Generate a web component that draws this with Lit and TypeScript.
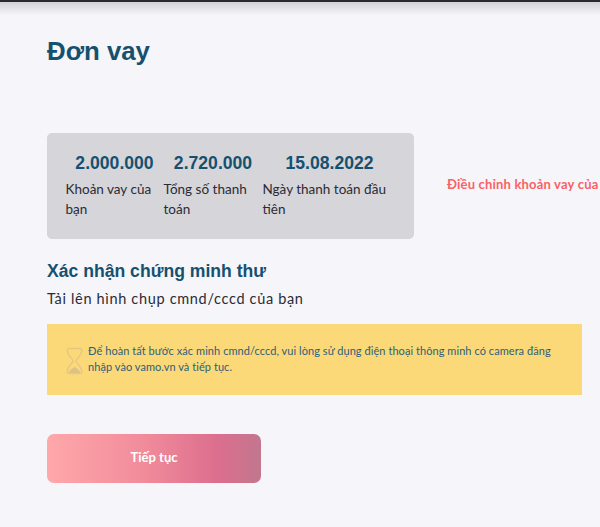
import { LitElement, html, css } from "lit";
import { customElement } from "lit/decorators.js";

@customElement("app-root")
export class AppRoot extends LitElement {
  static styles = css`
    :host { display: block; width: 600px; height: 527px; overflow: hidden; background: #f5f5fa; font-family: "Lato", sans-serif; color: #2b2b33; }
    .topbar { height: 2px; background: #2a2a2e; }
    .shade { height: 13px; background: linear-gradient(#d2d2d6, #f5f5fa); }
    main { padding: 19px 0 0 47px; width: 600px; box-sizing: border-box; }
    h1 { margin: 0; font: bold 25.8px/34px "Liberation Sans", sans-serif; color: #15516f; height: 99px; }
    .row { display: flex; align-items: center; }
    .card { width: 367px; height: 106px; box-sizing: border-box; background: #d5d5da; border-radius: 5px; padding: 18px 0 0 18.5px; display: flex; flex: none; }
    .stat { width: 98px; flex: none; }
    .stat.mid { width: 99px; }
    .stat.last { width: 134px; }
    .num { font: bold 17.6px/24px "Liberation Sans", sans-serif; color: #15516f; text-align: center; }
    .lab { font-size: 13.5px; line-height: 20px; margin-top: 4px; }
    .adj { margin: 0 0 4px 33px; font-size: 13px; font-weight: 700; letter-spacing: 0.19px; color: #fa6166; white-space: nowrap; }
    h2 { margin: 20px 0 0; font: bold 17.6px/24px "Liberation Sans", sans-serif; color: #15516f; }
    .sub { margin-top: 6px; font-size: 14.5px; line-height: 20px; letter-spacing: 0.67px; }
    .notice { margin-top: 15px; width: 535px; height: 71px; box-sizing: border-box; background: #fbd878; display: flex; align-items: center; padding: 0 20px 2px 19px; gap: 5px; }
    .notice svg { flex: none; margin-top: 5px; }
    .notice p { margin: 0; font-size: 11px; line-height: 16px; color: #2f5f78; letter-spacing: 0.06px; }
    .btn { margin-top: 39px; width: 214px; height: 49px; box-sizing: border-box; padding-bottom: 3px; border-radius: 7px; display: flex; align-items: center; justify-content: center; color: #fff; font: 700 13px "Lato", sans-serif; background: linear-gradient(90deg, #ffa8aa 0%, #f18c9b 45%, #dc6e8e 80%, #c2778f 100%); }
  `;

  render() {
    return html`
      <div class="topbar"></div>
      <div class="shade"></div>
      <main>
        <h1>Đơn vay</h1>
        <div class="row">
          <div class="card">
            <div class="stat"><div class="num">2.000.000</div><div class="lab">Khoản vay của bạn</div></div>
            <div class="stat mid"><div class="num">2.720.000</div><div class="lab">Tổng số thanh toán</div></div>
            <div class="stat last"><div class="num">15.08.2022</div><div class="lab">Ngày thanh toán đầu tiên</div></div>
          </div>
          <div class="adj">Điều chỉnh khoản vay của</div>
        </div>
        <h2>Xác nhận chứng minh thư</h2>
        <div class="sub">Tải lên hình chụp cmnd/cccd của bạn</div>
        <div class="notice">
          <svg width="17" height="28" viewBox="0 0 17 28" fill="none">
            <path d="M2.5 26 Q4 22 8.5 20 Q13 22 14.5 26Z" fill="#dcc285"/>
            <path d="M3 1.5H14A1.8 1.8 0 0 1 15.8 3.3C15.8 9 10.5 11 10 14C10.5 17 15.8 19 15.8 24.7A1.8 1.8 0 0 1 14 26.5H3A1.8 1.8 0 0 1 1.2 24.7C1.2 19 6.5 17 7 14C6.5 11 1.2 9 1.2 3.3A1.8 1.8 0 0 1 3 1.5Z" stroke="#e2c883" stroke-width="1.4"/>
          </svg>
          <p>Để hoàn tất bước xác minh cmnd/cccd, vui lòng sử dụng điện thoại thông minh có camera đăng nhập vào vamo.vn và tiếp tục.</p>
        </div>
        <div class="btn">Tiếp tục</div>
      </main>
    `;
  }
}
